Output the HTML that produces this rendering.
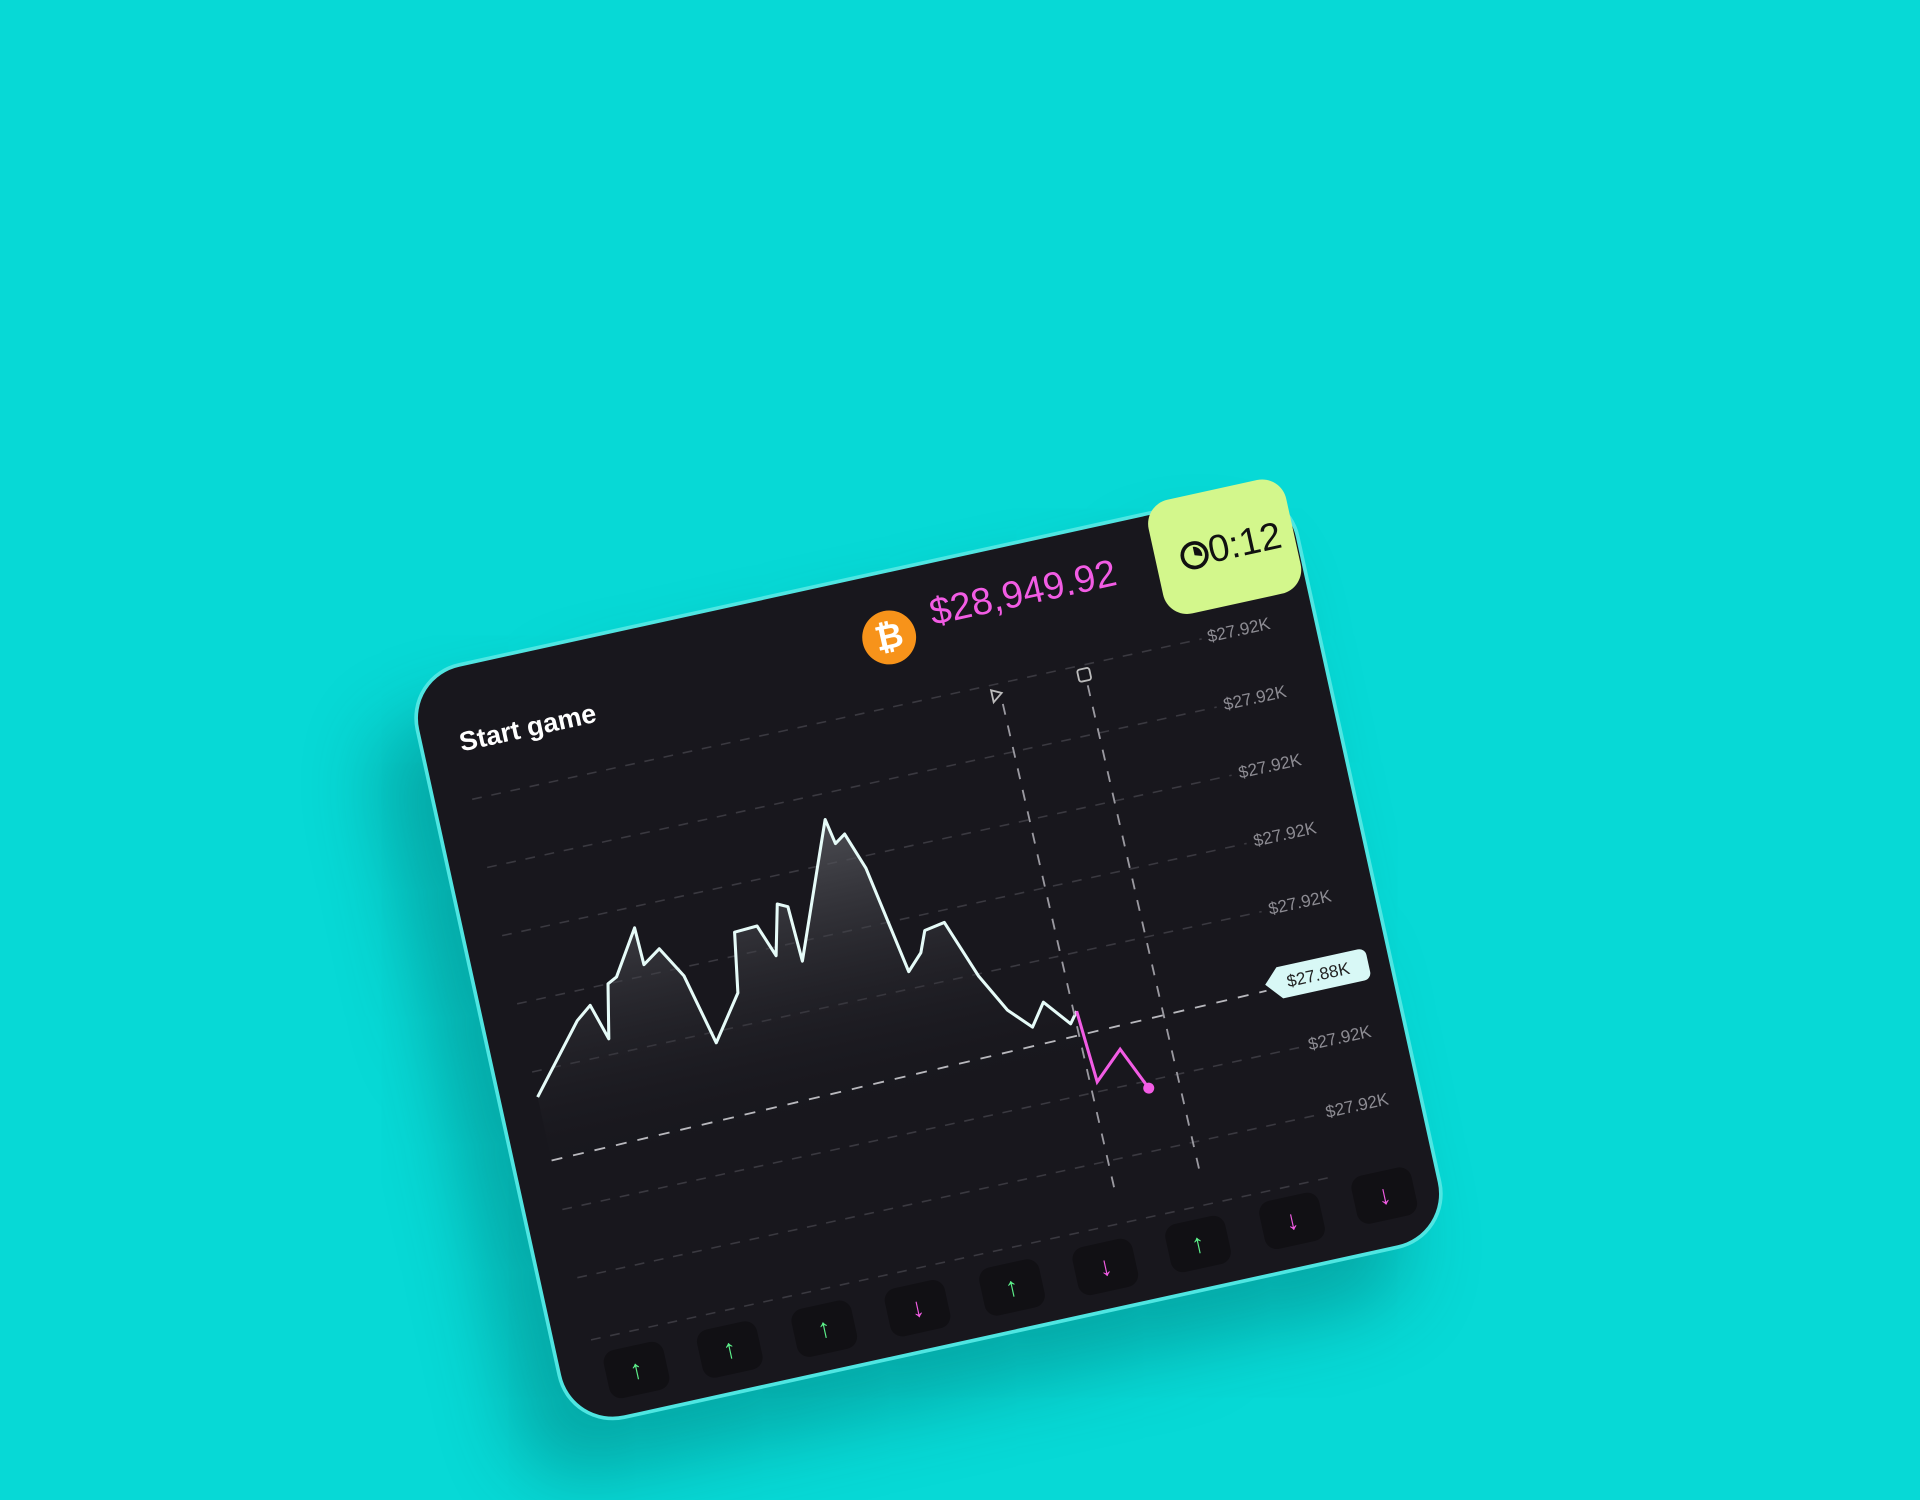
<!DOCTYPE html>
<html><head><meta charset="utf-8"><style>
html,body{margin:0;padding:0}
body{width:1920px;height:1500px;background:#07d9d6;overflow:hidden;position:relative;font-family:"Liberation Sans",sans-serif}
#card{position:absolute;left:558.5px;top:640px;width:739px;height:632px;transform-origin:center;transform:rotate(-12.4deg) scale(1.2245);background:#18171d;border:3px solid #4fe6e2;border-radius:46px;box-sizing:border-box;box-shadow:-40px 40px 60px rgba(0,80,80,.35)}
.lbl{position:absolute;color:#8d8c93;font-size:14px}
.btn{position:absolute;width:50px;height:40px;background:#111014;border-radius:10px;text-align:center;line-height:40px;font-size:22px}
</style></head><body>
<div id="card">
<div style="position:absolute;left:30px;top:48px;color:#fff;font-weight:bold;font-size:22px">Start game</div>
<div style="position:absolute;left:369px;top:30px;width:44px;height:44px;border-radius:50%;background:#f7931a;color:#fff;font-weight:bold;font-size:28px;text-align:center;line-height:44px">₿</div>
<div style="position:absolute;left:428px;top:22px;color:#f25ce4;font-size:31px">$28,949.92</div>
<svg style="position:absolute;left:0;top:0" width="739" height="632">
<defs><linearGradient id="g" x1="0" y1="0" x2="0" y2="1"><stop offset="0" stop-color="#5a5b61" stop-opacity=".8"/><stop offset="1" stop-color="#18171d" stop-opacity="0"/></linearGradient></defs>
<g stroke="#3a3940" stroke-dasharray="8 8" stroke-width="1.3">
<line x1="30" y1="108" x2="640" y2="108"/><line x1="30" y1="165" x2="640" y2="165"/><line x1="30" y1="222" x2="640" y2="222"/><line x1="30" y1="279" x2="640" y2="279"/><line x1="30" y1="336" x2="640" y2="336"/><line x1="30" y1="451" x2="650" y2="451"/><line x1="30" y1="508" x2="650" y2="508"/><line x1="30" y1="560" x2="650" y2="560"/>
</g>
<polygon fill="url(#g)" points="30,357 75,303 88,293 97,323 106,279 114,275 137,239 138,270 153,260 168,286 182,345 208,309 216,260 235,259 245,286 255,245 263,249 265,295 293,224 308,186 312,207 321,201 332,232 348,322 361,309 368,292 385,289 403,338 420,370 437,388 450,370 468,392 475,383 475,430 30,430"/>
<polyline fill="none" stroke="#e6fbf8" stroke-width="2.5" stroke-linejoin="round" points="30,357 75,303 88,293 97,323 106,279 114,275 137,239 138,270 153,260 168,286 182,345 208,309 216,260 235,259 245,286 255,245 263,249 265,295 293,224 308,186 312,207 321,201 332,232 348,322 361,309 368,292 385,289 403,338 420,370 437,388 450,370 468,392 475,383"/>
<polyline fill="none" stroke="#f25ce4" stroke-width="2.5" points="475,383 479,443 503,421 519,457"/>
<circle cx="519" cy="457" r="4.5" fill="#f25ce4"/>
<g stroke="#9a99a0" stroke-dasharray="9 9" stroke-width="1.5">
<line x1="30" y1="410" x2="630" y2="400" stroke="#b8b8bd"/>
<line x1="470" y1="125" x2="474" y2="535"/><line x1="541" y1="125" x2="545" y2="535"/>
</g>
<path d="M463 112 l8 4 l-8 6 z" fill="none" stroke="#bbb" stroke-width="1.5"/>
<rect x="535" y="111" width="10" height="10" rx="2" fill="none" stroke="#bbb" stroke-width="1.5"/>
<path d="M630 395 l12 -12 h68 a6 6 0 0 1 6 6 v14 a6 6 0 0 1 -6 6 h-68 z" fill="#d8f8f6"/>
<text x="648" y="401" font-family="Liberation Sans" font-size="14" fill="#222">$27.88K</text>
</svg>
<div class="lbl" style="left:645px;top:99px">$27.92K</div>
<div class="lbl" style="left:646px;top:156px">$27.92K</div>
<div class="lbl" style="left:646px;top:213px">$27.92K</div>
<div class="lbl" style="left:646px;top:270px">$27.92K</div>
<div class="lbl" style="left:646px;top:327px">$27.92K</div>
<div class="lbl" style="left:654px;top:442px">$27.92K</div>
<div class="lbl" style="left:656px;top:499px">$27.92K</div>
<div class="btn" style="left:36px;top:572px;color:#5df08a">↑</div>
<div class="btn" style="left:114px;top:572px;color:#5df08a">↑</div>
<div class="btn" style="left:193px;top:572px;color:#5df08a">↑</div>
<div class="btn" style="left:271px;top:572px;color:#f25ce4">↓</div>
<div class="btn" style="left:350px;top:572px;color:#5df08a">↑</div>
<div class="btn" style="left:428px;top:572px;color:#f25ce4">↓</div>
<div class="btn" style="left:506px;top:570px;color:#5df08a">↑</div>
<div class="btn" style="left:585px;top:568px;color:#f25ce4">↓</div>
<div class="btn" style="left:663px;top:564px;color:#f25ce4">↓</div>
<div style="position:absolute;left:617px;top:-9px;width:115px;height:95px;background:#d3f78c;border-radius:20px;box-sizing:border-box;padding-left:20px;line-height:95px;font-size:31px;color:#111">
<svg width="24" height="24" style="vertical-align:-3px"><circle cx="12" cy="12" r="10" fill="none" stroke="#111" stroke-width="3"/><path d="M12 12 L12 5 A7 7 0 0 1 18 14 Z" fill="#111"/></svg>0:12</div>
</div>
</body></html>
